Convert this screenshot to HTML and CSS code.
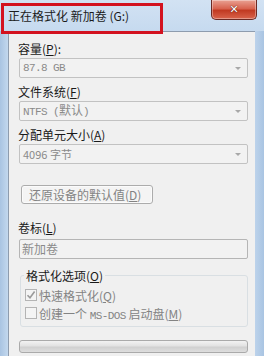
FILE: index.html
```html
<!DOCTYPE html>
<html>
<head>
<meta charset="utf-8">
<link rel="stylesheet" href="styles.css">
</head>
<body>
<div class="win">
  <div class="titlebar">
    <span class="title">正在格式化 新加卷 (G:)</span>
    <div class="close"><span class="x">✕</span></div>
  </div>
  <div class="mark"></div>
  <div class="panel">
    <div class="label">容量(<u>P</u>):</div>
    <div class="combo"><span class="val mono">87.8 GB</span><span class="arrow"></span></div>
    <div class="label">文件系统(<u>F</u>)</div>
    <div class="combo"><span class="val mono">NTFS (<span class="cj">默认</span>)</span><span class="arrow"></span></div>
    <div class="label">分配单元大小(<u>A</u>)</div>
    <div class="combo"><span class="val">4096 字节</span><span class="arrow"></span></div>
    <div class="btn">还原设备的默认值(<u>D</u>)</div>
    <div class="label lbl-vol">卷标(<u>L</u>)</div>
    <div class="textbox">新加卷</div>
    <div class="group">
      <div class="legend">格式化选项(<u>O</u>)</div>
      <div class="check"><span class="box"><svg width="10" height="10" viewBox="0 0 10 10"><path d="M1.5 5.2 L4 7.8 L8.6 1.6" fill="none" stroke="#9a9a9a" stroke-width="1.6"/></svg></span><span>快速格式化(<u>Q</u>)</span></div>
      <div class="check"><span class="box"></span><span>创建一个 <span class="mono">MS-DOS</span> 启动盘(<u>M</u>)</span></div>
    </div>
    <div class="progress"></div>
  </div>
</div>
</body>
</html>
```
FILE: styles.css
```css
html, body {
  margin: 0;
  padding: 0;
}
body {
  width: 264px;
  height: 356px;
  overflow: hidden;
  font-family: "Noto Sans CJK SC", "Liberation Sans", sans-serif;
  font-size: 12px;
  color: #1a1a1a;
}
.win {
  position: relative;
  width: 264px;
  height: 356px;
  background: linear-gradient(90deg, #a9c4e2 0, #c3d8ee 8px, #c7dbf0 250px, #a9c4e2 264px);
}
.titlebar {
  height: 31px;
  display: flex;
  justify-content: space-between;
  align-items: flex-start;
  background: linear-gradient(180deg, #d2e2f3 0, #c6daef 100%);
}
.title {
  margin: 8px 0 0 8px;
  line-height: 16px;
  font-size: 12px;
  color: #1b1b1b;
}
.close {
  width: 44px;
  height: 19px;
  margin-right: 7px;
  border: 1px solid #6b2a24;
  border-top: none;
  border-radius: 0 0 5px 5px;
  background: linear-gradient(180deg, #e9a293 0, #d8634f 45%, #c13a22 55%, #d9644c 100%);
  display: flex;
  align-items: center;
  justify-content: center;
  box-shadow: inset 0 0 0 1px rgba(255,255,255,0.35);
}
.x {
  color: #fff;
  font-family: "DejaVu Sans", sans-serif;
  font-weight: bold;
  font-size: 11px;
  line-height: 12px;
  text-shadow: 0 0 1px #5a1a10, 0 0 1px #5a1a10;
}
.mark {
  position: absolute;
  left: 1px;
  top: 3px;
  width: 156px;
  height: 25px;
  border: 3px solid #d3121f;
}
.panel {
  margin-left: 8px;
  width: 247px;
  height: 325px;
  background: #f0f0f0;
  border-top: 1px solid #8e9cae;
  border-left: 1px solid #8e9cae;
  box-sizing: border-box;
  padding: 9px 0 0 9px;
  display: flex;
  flex-direction: column;
  align-items: flex-start;
}
.label {
  line-height: 16px;
  height: 16px;
  margin-bottom: 1px;
}
u {
  text-decoration: underline;
  text-underline-offset: 1px;
}
.combo {
  width: 229px;
  height: 20px;
  box-sizing: border-box;
  margin-left: 1px;
  border: 1px solid #c2c2c2;
  border-radius: 2px;
  background: #f2f2f2;
  display: flex;
  align-items: center;
  justify-content: space-between;
  padding: 0 6px 0 3px;
  margin-bottom: 6px;
}
.val {
  color: #8a8a8a;
  font-size: 11px;
  line-height: 14px;
}
.mono {
  font-family: "Liberation Mono", "Noto Sans CJK SC", monospace;
  font-size: 11px;
  letter-spacing: -0.6px;
}
.cj {
  font-family: "Noto Sans CJK SC", sans-serif;
  font-size: 12px;
  letter-spacing: 0;
}
.arrow {
  width: 0;
  height: 0;
  border-left: 3px solid transparent;
  border-right: 3px solid transparent;
  border-top: 3px solid #a8a8a8;
}
.btn {
  margin: 15px 0 0 3px;
  width: 132px;
  height: 19px;
  box-sizing: border-box;
  border: 1px solid #acacac;
  border-radius: 3px;
  background: #f4f4f4;
  box-shadow: inset 0 0 0 1px #fbfbfb;
  color: #838383;
  line-height: 17px;
  padding-left: 7px;
}
.lbl-vol {
  margin-top: 16px;
  margin-bottom: 3px;
}
.textbox {
  margin-left: 1px;
  width: 229px;
  height: 20px;
  box-sizing: border-box;
  border: 1px solid #b5b5b5;
  border-radius: 2px;
  background: #f2f2f2;
  color: #8a8a8a;
  line-height: 18px;
  padding-left: 2px;
}
.group {
  position: relative;
  margin: 16px 0 0 2px;
  width: 228px;
  height: 52px;
  box-sizing: border-box;
  border: 1px solid #d9dfe3;
  border-radius: 3px;
  padding: 10px 0 0 4px;
}
.legend {
  position: absolute;
  top: -8px;
  left: 3px;
  background: #f0f0f0;
  padding: 0 2px;
  line-height: 15px;
}
.check {
  display: flex;
  align-items: center;
  gap: 2px;
  height: 18px;
  color: #838383;
}
.box {
  width: 12px;
  height: 12px;
  box-sizing: border-box;
  border: 1px solid #b4b4b4;
  background: #f4f4f4;
  display: flex;
  align-items: center;
  justify-content: center;
}
.progress {
  margin: 13px 0 0 1px;
  width: 229px;
  height: 13px;
  box-sizing: border-box;
  border: 1px solid #aaaaaa;
  border-radius: 3px;
  background: linear-gradient(180deg, #f2f2f2 0, #e2e2e2 45%, #d0d0d0 55%, #dedede 100%);
}
```
